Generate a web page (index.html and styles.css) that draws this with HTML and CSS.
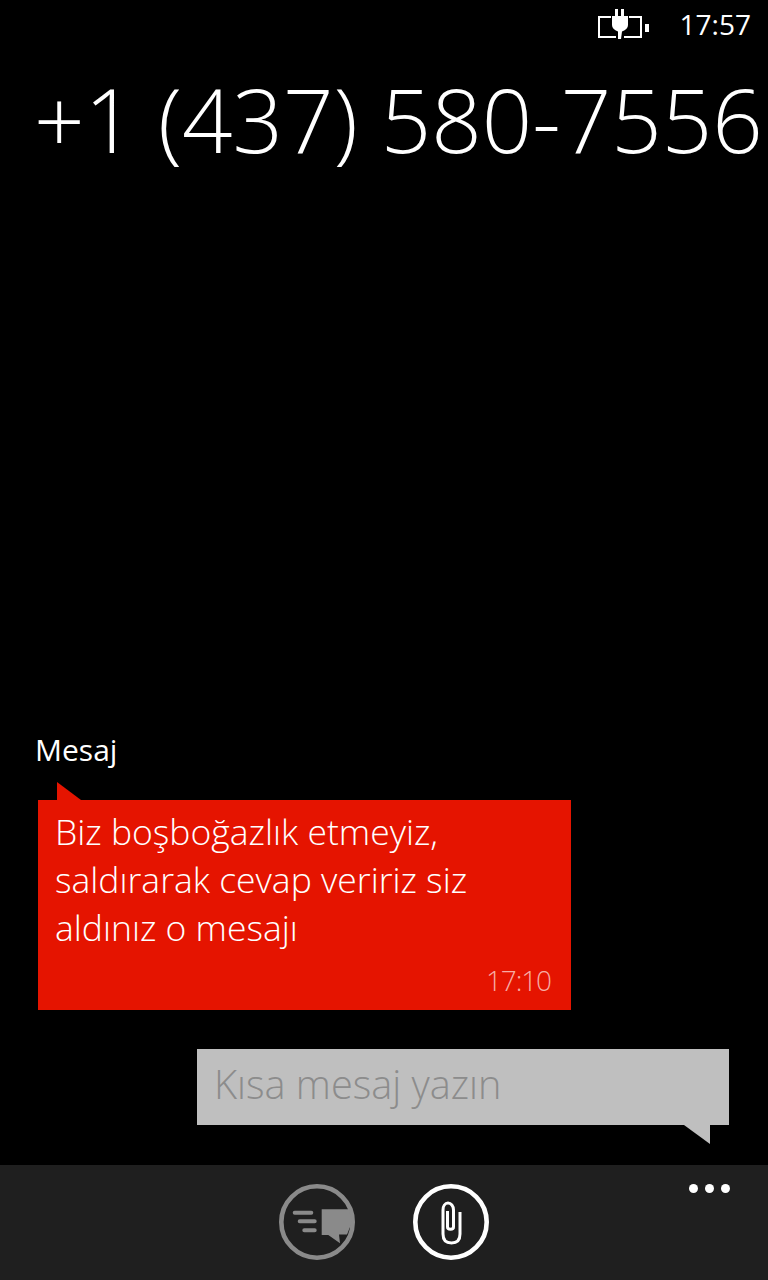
FILE: index.html
```html
<!DOCTYPE html>
<html>
<head>
  <meta charset="utf-8">
  <title>Mesaj</title>
  <link rel="stylesheet" href="styles.css">
</head>
<body>
<div class="screen">

  <!-- status -->
  <div class="status">
    <svg class="battery" width="52" height="32" viewBox="0 0 52 32">
      <path d="M13 9H1V29H18M31 9H43V29H26" fill="none" stroke="#fff" stroke-width="2"/>
      <rect x="47" y="16" width="4" height="8" fill="#fff"/>
      <path d="M17 1h3v7h3V1h3v7h4v9c0 3-2 5-6 6.500L23 31h-3v-7.500C16 22 14 20 14 17V8h3z" fill="#fff"/>
    </svg>
    <span class="clock">17:57</span>
  </div>

  <h1 class="number">+1 (437) 580-7556</h1>

  <!-- messages -->
  <div class="thread">
    <div class="label">Mesaj</div>
    <div class="bubble">
      <p class="bubble-text">Biz boşboğazlık etmeyiz,<br>saldırarak cevap veririz siz<br>aldınız o mesajı</p>
      <div class="bubble-time">17:10</div>
    </div>
    <div class="compose">Kısa mesaj yazın</div>
  </div>

  <!-- app bar -->
  <div class="appbar">
    <div class="appbar-buttons">
      <svg class="round-btn" width="76" height="76" viewBox="0 0 76 76">
        <circle cx="38" cy="38" r="35.700" fill="none" stroke="#8a8a8a" stroke-width="4.600"/>
        <path d="M42.700 25.300H70L73 38 68 50.500H60L61 59.300 49.300 51H42.700z" fill="#8a8a8a"/>
        <path d="M15.700 28.700H32.300M20.700 37.300H35.700M25.300 46.300H35.700" stroke="#8a8a8a" stroke-width="4" stroke-linecap="round"/>
      </svg>
      <svg class="round-btn" width="76" height="76" viewBox="0 0 76 76">
        <circle cx="38" cy="38" r="35.700" fill="none" stroke="#fff" stroke-width="4.600"/>
        <path d="M47 28V50C47 56 44 59 38.500 59 33 59 30 56 30 50V26C30 22 32 19 35 19 38 19 40.500 22 40.500 26V43C40.500 46 34.500 46 34.500 43V27" fill="none" stroke="#fff" stroke-width="3"/>
      </svg>
    </div>
    <div class="dots"><i></i><i></i><i></i></div>
  </div>

</div>
</body>
</html>
```

FILE: styles.css
```css
body {
  margin: 0;
  background: #000;
  color: #fff;
  font-family: "Open Sans", sans-serif;
}
.screen {
  display: flex;
  flex-direction: column;
  height: 1280px;
  overflow: hidden;
}
.status {
  display: flex;
  justify-content: flex-end;
  align-items: center;
  gap: 30px;
  height: 48px;
  padding-right: 17px;
}
.clock {
  font-size: 28px;
  font-weight: 400;
}
.number {
  margin: 16px 0 0 34px;
  font-size: 88.500px;
  line-height: 110px;
  font-weight: 300;
  white-space: nowrap;
}
.thread {
  flex: 1;
  display: flex;
  flex-direction: column;
  justify-content: flex-end;
  padding-bottom: 40px;
}
.label {
  margin: 0 0 30px 35px;
  font-size: 30px;
  line-height: 40px;
  font-weight: 400;
}
.bubble {
  position: relative;
  box-sizing: border-box;
  width: 533px;
  height: 210px;
  margin: 0 0 39px 38px;
  padding: 7px 20px 0 17px;
  background: #e51400;
}
.bubble::before {
  content: "";
  position: absolute;
  left: 19px;
  top: -18px;
  border-right: 24px solid transparent;
  border-bottom: 18px solid #e51400;
}
.bubble-text {
  margin: 0;
  font-size: 35.500px;
  line-height: 48px;
  font-weight: 300;
}
.bubble-time {
  margin-top: 11px;
  text-align: right;
  font-size: 28px;
  line-height: 36px;
  font-weight: 300;
  letter-spacing: -1.100px;
  color: #f7aca5;
}
.compose {
  position: relative;
  box-sizing: border-box;
  width: 532px;
  height: 76px;
  margin-left: 197px;
  padding: 11px 17px;
  background: #bfbfbf;
  color: #8c8c8c;
  font-size: 39.700px;
  line-height: 48px;
  font-weight: 300;
}
.compose::after {
  content: "";
  position: absolute;
  right: 19px;
  bottom: -19px;
  border-left: 26px solid transparent;
  border-top: 19px solid #bfbfbf;
}
.appbar {
  display: grid;
  grid-template-columns: 1fr auto 1fr;
  height: 115px;
  background: #1f1f1f;
}
.appbar-buttons {
  grid-column: 2;
  display: flex;
  gap: 58px;
  padding-top: 19px;
}
.dots {
  justify-self: end;
  display: flex;
  gap: 7px;
  height: 9px;
  padding: 19px 38px 0 0;
}
.dots i {
  width: 9px;
  height: 9px;
  border-radius: 50%;
  background: #fff;
}
```
